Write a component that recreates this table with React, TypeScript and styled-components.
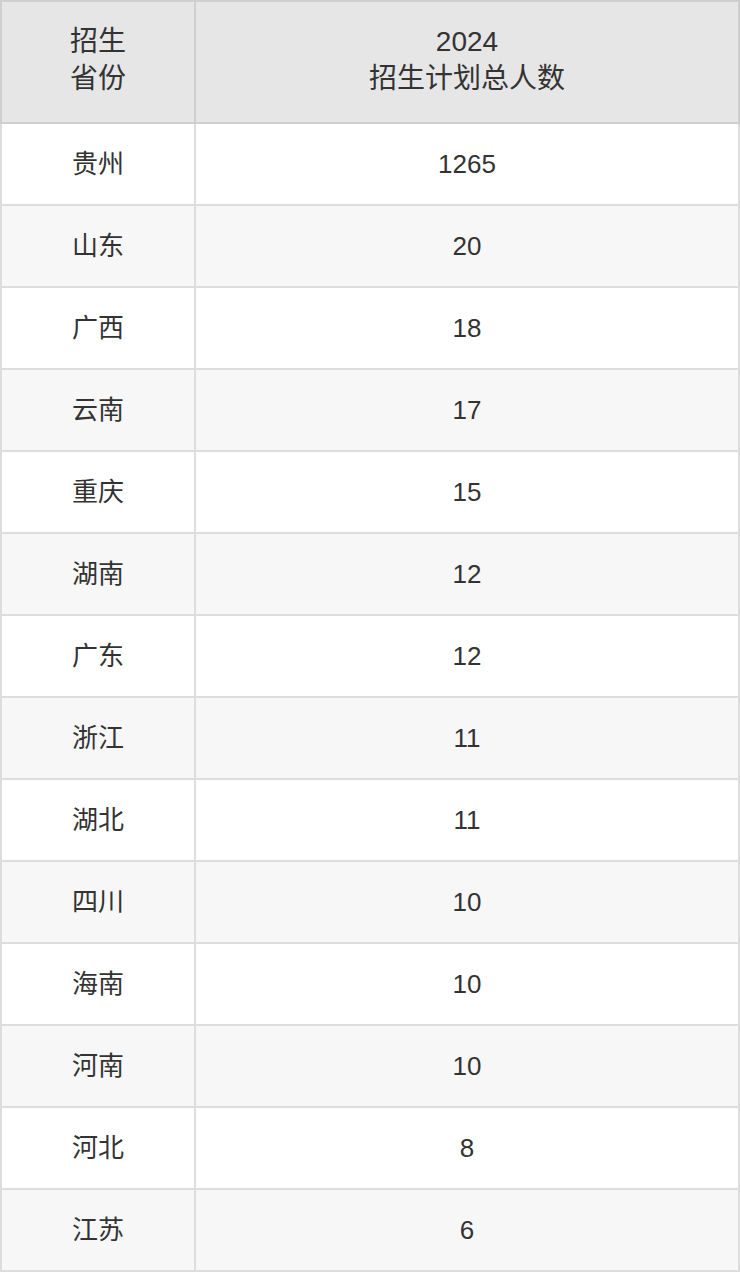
import styled, { createGlobalStyle } from "styled-components";

const GlobalStyle = createGlobalStyle`
    html, body {
        margin: 0;
        padding: 0;
        background: #ffffff;
    }
    body {
        font-family: "Liberation Sans", Arial, "Noto Sans CJK SC", sans-serif;
        color: #333333;
    }
`;

const plans = [
    { province: "贵州", count: 1265 },
    { province: "山东", count: 20 },
    { province: "广西", count: 18 },
    { province: "云南", count: 17 },
    { province: "重庆", count: 15 },
    { province: "湖南", count: 12 },
    { province: "广东", count: 12 },
    { province: "浙江", count: 11 },
    { province: "湖北", count: 11 },
    { province: "四川", count: 10 },
    { province: "海南", count: 10 },
    { province: "河南", count: 10 },
    { province: "河北", count: 8 },
    { province: "江苏", count: 6 },
];

export default function App() {
    return (
        <>
            <GlobalStyle />
            <Table>
                <HeadRow>
                    <HeadCell>招生<br />省份</HeadCell>
                    <HeadCell>2024<br />招生计划总人数</HeadCell>
                </HeadRow>
                {plans.map((p, i) => (
                    <Row key={p.province} striped={i % 2 === 1}>
                        <Cell>{p.province}</Cell>
                        <Cell>{p.count}</Cell>
                    </Row>
                ))}
            </Table>
        </>
    );
}

const Table = styled.div`
    width: 740px;
    display: flex;
    flex-direction: column;
    font-size: 26px;
`;

const HeadRow = styled.div`
    display: grid;
    grid-template-columns: 194px 544px;
    background: #e6e6e6;
    border-top: 2px solid #cfcfcf;
    border-left: 2px solid #cfcfcf;
`;

const HeadCell = styled.div`
    box-sizing: border-box;
    height: 122px;
    padding-top: 21px;
    font-size: 28px;
    line-height: 37px;
    text-align: center;
    border-right: 2px solid #cfcfcf;
    border-bottom: 2px solid #cfcfcf;
`;

const Row = styled.div<{ striped?: boolean }>`
    display: grid;
    grid-template-columns: 194px 544px;
    background: ${({ striped }) => (striped ? "#f7f7f7" : "#ffffff")};
    border-left: 2px solid #dddddd;
`;

const Cell = styled.div`
    box-sizing: border-box;
    height: 82px;
    display: flex;
    align-items: center;
    justify-content: center;
    line-height: 38px;
    border-right: 2px solid #dddddd;
    border-bottom: 2px solid #dddddd;
`;
